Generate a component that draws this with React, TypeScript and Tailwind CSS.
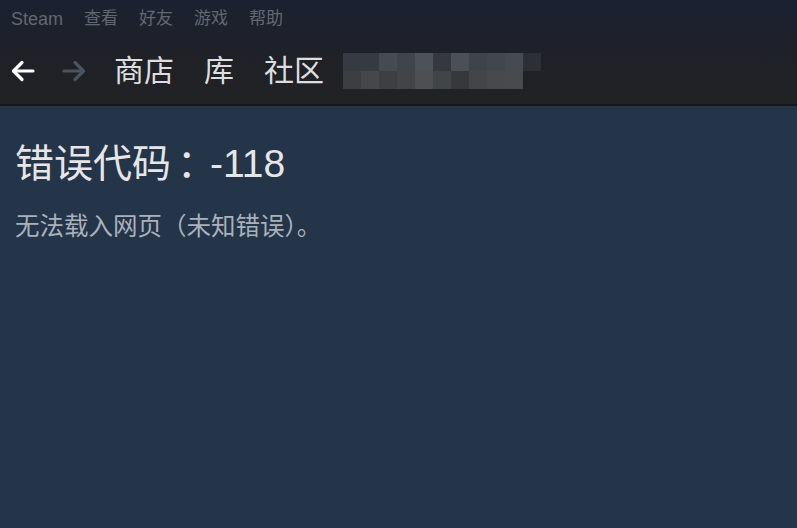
const menuItems = ['Steam', '查看', '好友', '游戏', '帮助'];
const navItems = ['商店', '库', '社区'];

const topRow = ['#363a42', '#363a42', '#464b53', '#40454c', '#4d5259', '#35383f', '#4b4f57', '#3f434a', '#42464d', '#464a51', '#2c2f33'];
const bottomRow = ['#3c3e41', '#45484b', '#3d3f42', '#424446', '#4d4f52', '#424547', '#36383a', '#434547', '#47494b', '#484a4d', 'transparent'];

function Pixelated() {
  return (
    <div className="flex flex-col">
      {[topRow, bottomRow].map((row, r) => (
        <div key={r} className="flex">
          {row.map((c, i) => (
            <div key={i} className="w-[18px] h-[18px]" style={{ backgroundColor: c }} />
          ))}
        </div>
      ))}
    </div>
  );
}

function Arrow({ dir, color }: { dir: 'left' | 'right'; color: string }) {
  return (
    <svg width="24" height="24" viewBox="0 0 24 24" fill="none" stroke={color} strokeWidth="3.2" strokeLinecap="round" strokeLinejoin="round">
      {dir === 'left' ? (
        <>
          <path d="M22 12H3" />
          <path d="M11 3.5L2.5 12l8.5 8.5" />
        </>
      ) : (
        <>
          <path d="M2 12h19" />
          <path d="M13 3.5l8.5 8.5-8.5 8.5" />
        </>
      )}
    </svg>
  );
}

export default function App() {
  return (
    <div
      className="w-[797px] h-[528px] overflow-hidden bg-[#243449] flex flex-col"
      style={{ fontFamily: '"Liberation Sans", "Noto Sans CJK SC", sans-serif' }}
    >
      <div className="bg-gradient-to-b from-[#1b2131] via-[#1f2128] to-[#212223]">
        <div className="h-[38px] flex items-center gap-[21px] px-[11px] text-[17px] text-[#616871]">
          {menuItems.map((m) => (
            <span key={m} className={m === 'Steam' ? 'text-[18px]' : ''}>{m}</span>
          ))}
        </div>
        <div className="h-[66px] flex items-center">
          <div className="flex items-center gap-[27px] pl-[11px] w-[114px]">
            <Arrow dir="left" color="#ffffff" />
            <Arrow dir="right" color="#4a5561" />
          </div>
          <div className="flex items-center gap-[30px] text-[30px] text-[#dcdedf] leading-none">
            {navItems.map((n) => (
              <span key={n}>{n}</span>
            ))}
          </div>
          <div className="ml-[19px]">
            <Pixelated />
          </div>
        </div>
      </div>
      <div className="h-[2px] bg-[#16191c]" />
      <div className="px-[15px] pt-[38px]">
        <h1 className="text-[39px] leading-none text-[#e6e6e6]">
          错误代码
          <span className="pl-[6px] tracking-[-6px]">：</span>
          -118
        </h1>
        <p className="mt-[32px] text-[24.5px] leading-none text-[#a9b1bb]">无法载入网页（未知错误）。</p>
      </div>
    </div>
  );
}
